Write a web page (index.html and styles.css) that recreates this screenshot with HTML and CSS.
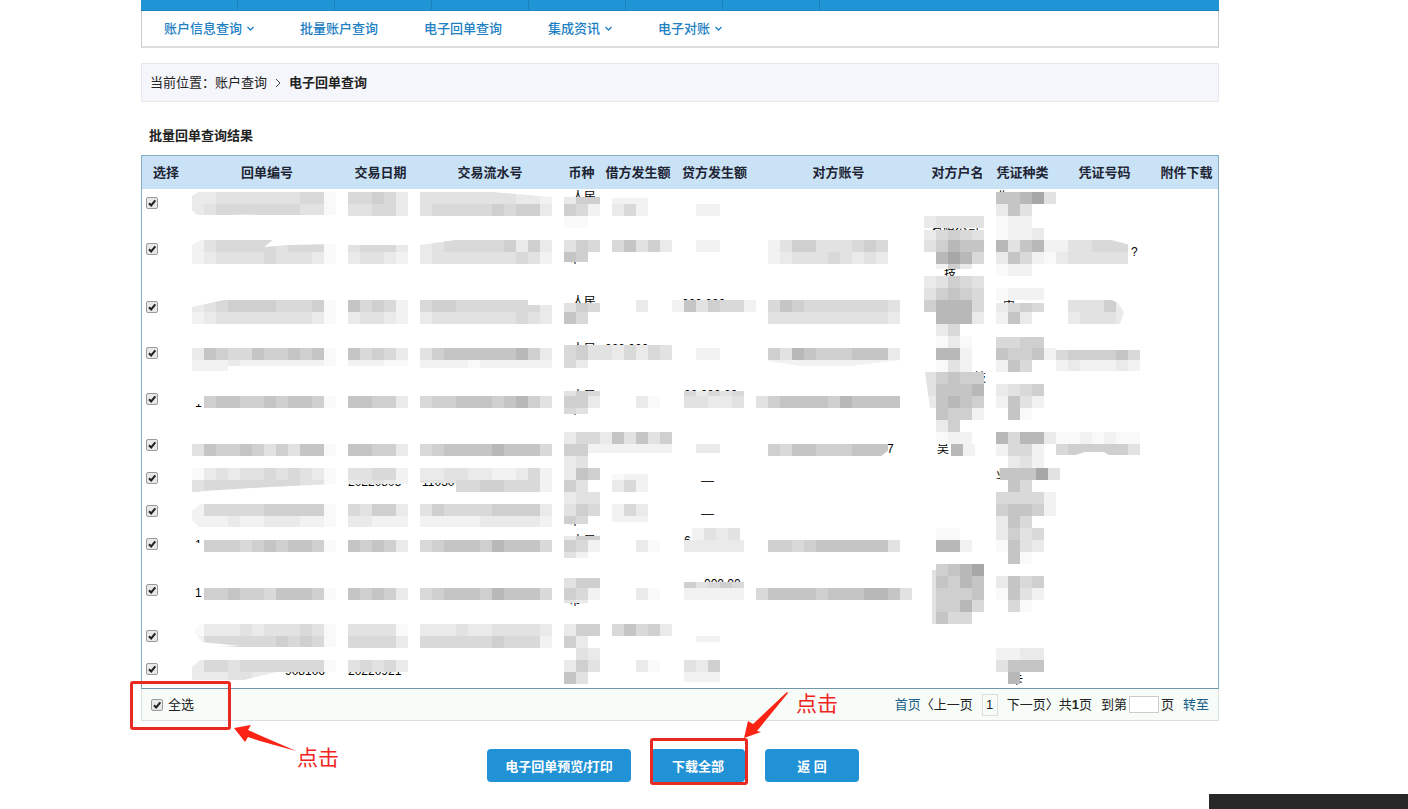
FILE: index.html
```
<!DOCTYPE html>
<html lang="zh-CN">
<head>
    <meta charset="UTF-8">
    <meta name="viewport" content="width=device-width, initial-scale=1.0">
    <title>电子回单查询</title>
    <link rel="stylesheet" href="styles.css">
</head>
<body>
    <div class="page">
        <div class="top-bar">
            <span></span><span></span><span></span><span></span><span></span><span></span><span></span>
        </div>
        <nav class="sub-nav">
            <a href="#">账户信息查询<svg class="caret" viewBox="0 0 7 5"><path d="M0.5 1 L3.5 4 L6.5 1"/></svg></a>
            <a href="#">批量账户查询</a>
            <a href="#">电子回单查询</a>
            <a href="#">集成资讯<svg class="caret" viewBox="0 0 7 5"><path d="M0.5 1 L3.5 4 L6.5 1"/></svg></a>
            <a href="#">电子对账<svg class="caret" viewBox="0 0 7 5"><path d="M0.5 1 L3.5 4 L6.5 1"/></svg></a>
        </nav>

        <div class="breadcrumb">
            <span>当前位置：账户查询</span>
            <svg class="arrow" viewBox="0 0 6 10"><path d="M1 1 L5 5 L1 9"/></svg>
            <strong>电子回单查询</strong>
        </div>

        <h1>批量回单查询结果</h1>

        <div class="table-wrap">
            <table>
                <colgroup>
                    <col class="c-select"><col class="c-number"><col class="c-date"><col class="c-serial">
                    <col class="c-currency"><col class="c-debit"><col class="c-credit"><col class="c-account">
                    <col class="c-name"><col class="c-type"><col class="c-voucher"><col class="c-file">
                </colgroup>
                <thead>
                    <tr>
                        <th>选择</th><th>回单编号</th><th>交易日期</th><th>交易流水号</th><th>币种</th><th>借方发生额</th>
                        <th>贷方发生额</th><th>对方账号</th><th>对方户名</th><th>凭证种类</th><th>凭证号码</th><th>附件下载</th>
                    </tr>
                </thead>
                <tbody id="rows"></tbody>
            </table>
            <!-- mosaic over the private data -->
            <svg id="mosaic" class="mosaic" viewBox="142 189 1076 499" preserveAspectRatio="none" aria-hidden="true"></svg>
        </div>

        <div class="table-footer">
            <label class="select-all"><input type="checkbox" checked>全选</label>
            <div class="pager">
                <span class="pair"><a href="#">首页</a><span>〈上一页</span></span>
                <span class="current">1</span>
                <span class="pair"><span>下一页〉</span><span>共<b>1</b>页</span></span>
                <span class="goto"><label for="pageNo">到第</label><input type="text" id="pageNo">页</span>
                <a href="#">转至</a>
            </div>
            <div class="mark mark-select"></div>
            <svg class="pointer pointer-select" viewBox="0 0 64 26"><path d="M0 3 L17 0 L14 5 L62 26 L26 16 L14 12 L11 17 Z"/></svg>
            <span class="hint hint-select">点击</span>
        </div>

        <div class="actions">
            <button type="button" class="wide">电子回单预览/打印</button>
            <div class="download">
                <button type="button">下载全部</button>
                <div class="mark mark-download"></div>
                <svg class="pointer pointer-download" viewBox="0 0 46 46"><path d="M1 46 L5 29 L10 32 L44 0 L45 1 L14 39 L18 40 Z"/></svg>
                <span class="hint hint-download">点击</span>
            </div>
            <button type="button">返 回</button>
        </div>
    </div>
    <div class="taskbar"></div>

    <script src="mosaic.js"></script>
</body>
</html>
```
FILE: styles.css
```
* { box-sizing: border-box; }
body { margin: 0; background-color: #fff; color: #222; font-family: "Liberation Sans", "Noto Sans CJK SC", sans-serif; font-size: 13px; line-height: 20px; }
a { color: #1c5f86; text-decoration: none; }
.page { padding: 0 189px 16px 141px; }

.top-bar { display: flex; height: 11px; background-color: #2095d6; border-bottom: 1px solid #1b86c3; }
.top-bar span { width: 97px; border-right: 1px solid #1b80bb; }
.sub-nav { display: flex; align-items: center; height: 37px; padding: 0 22px; gap: 46px; border: 1px solid #ccc; border-top: none; border-bottom: 2px solid #ddd; }
.sub-nav a { display: flex; align-items: center; gap: 5px; color: #2180c4; font-weight: 500; }
.caret { width: 7px; height: 5px; fill: none; stroke: #2180c4; stroke-width: 1.3; }

.breadcrumb { display: flex; align-items: center; gap: 8px; height: 39px; margin-top: 15px; padding: 0 8px; background-color: #f5f6fb; border: 1px solid #e6e6eb; }
.arrow { width: 6px; height: 10px; fill: none; stroke: #444; stroke-width: 1; }
h1 { margin: 24px 0 9px; padding-left: 8px; font-size: 13px; line-height: 20px; }

.table-wrap { position: relative; border: 1px solid #86adc4; border-bottom: 1px solid #7396a6; }
table { width: 100%; table-layout: fixed; border-collapse: collapse; }
th { height: 33px; padding: 0; background-color: #cae2f6; font-size: 13px; color: #1d2433; white-space: nowrap; }
td { padding: 8px 0 0 4px; vertical-align: top; line-height: 18px; }
td.credit { padding-right: 18px; text-align: center; }
.c-select { width: 48px; }
.c-number { width: 154px; }
.c-date { width: 73px; }
.c-serial { width: 146px; }
.c-currency { width: 37px; }
.c-debit { width: 76px; }
.c-credit { width: 77px; }
.c-account { width: 171px; }
.c-name { width: 67px; }
.c-type { width: 63px; }
.c-voucher { width: 101px; }
.c-file { width: 63px; }
.one-line { height: 33px; }
.two-line { height: 46px; }
.three-line { height: 58px; }
.mosaic { position: absolute; left: 0; top: 33px; width: 100%; height: calc(100% - 33px); pointer-events: none; font-size: 12px; }

input[type="checkbox"] { appearance: none; display: block; width: 12px; height: 12px; margin: 0; border: 1px solid #9a9a9a; border-radius: 2px; background: #e8e8e8 url("data:image/svg+xml,%3Csvg xmlns='http://www.w3.org/2000/svg' viewBox='0 0 10 10'%3E%3Cpath d='M2 5.2 L4.2 7.5 L8.3 2.4' fill='none' stroke='%23222' stroke-width='2'/%3E%3C/svg%3E") center / 10px 10px no-repeat; }

.table-footer { position: relative; display: flex; align-items: center; justify-content: space-between; height: 32px; padding: 0 9px; background-color: #f7fcf9; border: 1px solid #dcdfdf; border-top: none; }
.select-all { display: flex; align-items: center; gap: 5px; }
.pager { display: flex; align-items: center; gap: 9px; }
.pair { display: flex; }
.current { width: 16px; height: 22px; border: 1px solid #dcdcdc; text-align: center; }
.goto { display: flex; align-items: center; gap: 2px; }
.goto input { width: 30px; height: 17px; padding: 0 2px; border: 1px solid #ccc; background-color: #fff; }

.actions { display: flex; justify-content: center; gap: 20px; margin-top: 28px; padding-right: 14px; }
button { width: 94px; height: 33px; padding: 0; border: none; border-radius: 4px; background-color: #2192d6; color: #fff; font-family: inherit; font-size: 13px; font-weight: bold; cursor: pointer; }
button.wide { width: 144px; }
.download { position: relative; }

.mark { position: absolute; border: 3px solid #e92a22; border-radius: 3px; }
.mark-select { left: -12px; top: -8px; width: 101px; height: 49px; }
.mark-download { left: -1px; top: -11px; width: 98px; height: 47px; }
.pointer { position: absolute; fill: #fb2314; }
.pointer-select { left: 92px; top: 36px; width: 64px; height: 26px; }
.pointer-download { left: 92px; top: -57px; width: 46px; height: 46px; }
.hint { position: absolute; color: #f0241c; font-size: 21px; line-height: 24px; white-space: nowrap; }
.hint-select { left: 155px; top: 57px; }
.hint-download { left: 145px; top: -57px; }

.taskbar { position: fixed; right: 0; bottom: 0; width: 199px; height: 15px; background-color: #282828; }
```
FILE: mosaic.js
```
// row heights and the credit column of the rows that have no amount
const rows = [
    ["two-line", ""], ["three-line", ""], ["two-line", ""], ["two-line", ""],
    ["two-line", ""], ["one-line", ""], ["one-line", "—"], ["one-line", "—"],
    ["two-line", ""], ["two-line", ""], ["one-line", ""], ["one-line", ""]
];

document.getElementById("rows").innerHTML = rows.map(([size, credit], i) => `
    <tr class="${size}">
        <td><input type="checkbox" aria-label="选择第${i + 1}行" checked></td>
        <td></td><td></td><td></td><td></td><td></td>
        <td class="credit">${credit}</td>
        <td></td><td></td><td></td><td></td><td></td>
    </tr>`).join("");

// 1 = lightest, 9 = darkest, "." = no tile
const shades = ["", "#f9f9f9", "#f2f2f2", "#eaeaea", "#e2e2e2", "#d9d9d9", "#cfcfcf", "#c5c5c5", "#b8b8b8", "#a7a7a7"];

// text that still shows at the edges of the tiles: x, y, text
const texts = [
    [572, 201, "人民"], [572, 306, "人民"], [572, 353, "人民"], [572, 400, "人民"], [572, 545, "人民"],
    [569, 263, "币"], [569, 367, "币"], [569, 414, "币"], [569, 525, "币"], [569, 605, "币"],
    [605, 353, "000,000"], [682, 308, "000,000"], [684, 399, "00,000.00"], [704, 588, "000.00"],
    [684, 545, "6"], [195, 407, "1"], [195, 549, "1"], [195, 597, "1"], [1131, 256, "?"],
    [348, 486, "20220805"], [422, 486, "110507"], [285, 675, "908106"], [348, 675, "20220921"],
    [937, 453, "吴"], [931, 235, "有限公司"], [944, 278, "技"], [944, 332, "司"], [1003, 310, "中"],
    [996, 479, "业"], [1011, 684, "卡"], [974, 382, "技"], [996, 201, "业"], [887, 453, "7"]
];

// x, y, shades, height
const tiles = [
    [192, 192, "334444444551"], [192, 204, "345555555441", 11],
    [348, 192, "55653"], [348, 204, "44553"],
    [420, 192, "44444444332"], [420, 204, "45555565663"],
    [564, 197, "366", 7], [564, 204, "652"], [564, 216, "11"],
    [612, 198, "222", 6], [612, 204, "352"], [696, 204, "22"],
    [996, 192, "77894"], [996, 204, "374"], [996, 216, "122"], [996, 228, "1223"],

    [192, 240, "245555545551"], [192, 252, "234444544431"],
    [348, 245, "45553", 7], [348, 252, "34432"],
    [420, 240, "34555556363"], [420, 252, "34444444542"],
    [564, 240, "465"], [564, 252, "76", 10],
    [612, 240, "57463"], [696, 240, "22"],
    [768, 240, "2466444565"], [768, 252, "2344454343"],
    [924, 216, "34444"], [924, 230, "35654", 10], [924, 240, "46877"], [936, 252, "8985"], [936, 264, "263", 5],
    [996, 240, "84782"], [996, 252, "37521"], [996, 264, "122"],
    [1056, 240, "244555"], [1056, 252, "344444"],

    [192, 300, "345666655561"], [192, 312, "234444444431"],
    [348, 300, "75652"], [348, 312, "34432"],
    [420, 300, "566555555"], [528, 305, "53", 7], [420, 312, "34444444543"],
    [564, 303, "465", 9], [564, 312, "75"],
    [636, 300, "3"], [672, 300, "2746552"],
    [768, 300, "57655555554"], [768, 312, "44444444443"],
    [924, 276, "34654"], [924, 288, "46765"], [924, 300, "68885"], [936, 312, "8883"], [936, 324, "35"], [936, 336, "22"],
    [996, 288, "1222"], [996, 303, "3565", 9], [996, 312, "273"],
    [1068, 300, "44463"], [1068, 312, "34443"],

    [192, 348, "376557667671"], [192, 360, "222322222221", 6], [192, 366, "222", 5],
    [348, 348, "75653"], [348, 360, "22211", 6],
    [420, 348, "46777777863"], [420, 360, "22221222222", 8],
    [564, 345, "564435354", 15], [564, 360, "53", 8],
    [696, 348, "22"], [768, 348, "64876667773"], [768, 360, "22222222222", 6],
    [936, 336, "131"], [936, 348, "882"], [936, 360, "142"],
    [996, 337, "5566", 11], [996, 348, "76672"], [996, 360, "275"],
    [1056, 350, "5666675", 10], [1056, 360, "2322232", 11],

    [204, 396, "67766767761"], [348, 396, "77663"], [420, 396, "56677767864"],
    [564, 391, "465", 5], [564, 396, "663"], [564, 408, "54", 6],
    [636, 396, "31"], [684, 391, "53545", 5], [684, 396, "44334"],
    [756, 396, "467777687777"],
    [924, 372, "46766"], [924, 384, "47778"], [924, 396, "37876"], [936, 408, "7662"], [936, 420, "36"], [936, 432, "122"],
    [996, 384, "3456"], [996, 396, "2742"], [996, 408, ".71"],

    [192, 444, "476676464771"], [348, 444, "77663"], [420, 444, "56777787775"],
    [564, 432, "355374746"], [564, 444, "66"], [588, 444, "2222222", 9],
    [564, 456, "34"], [564, 468, "376"], [564, 480, "64"], [564, 492, "344"], [564, 504, "465"], [564, 516, "65", 8],
    [696, 444, "33", 9], [768, 444, "6577666777"],
    [951, 444, "82"], [996, 432, "85883"], [996, 444, "2552"], [996, 456, ".342"],
    [1056, 432, "1121211"], [1056, 444, "5666664", 11],

    [192, 468, "134344545431"], [192, 480, "455555555441"],
    [348, 468, "44552"], [348, 480, "34432", 4],
    [420, 468, "33443322352"], [420, 480, "444", 3], [456, 480, "55665552"],
    [612, 474, "122", 6], [612, 480, "352"],
    [1000, 468, "77794"], [1008, 480, "75"], [996, 492, "55552"], [996, 504, "67762"],
    [996, 516, "375"], [996, 528, "3645"], [996, 540, "1743"], [996, 552, ".71"],

    [192, 504, "255555666661"], [192, 516, "222322333221", 11],
    [348, 504, "54663"], [348, 516, "33222", 11],
    [420, 504, "46555566663"], [420, 516, "22222333332", 11],
    [612, 504, "253"], [612, 516, "222", 6],

    [204, 540, "66656767761"], [348, 540, "76763"], [420, 540, "56777687775"],
    [564, 536, "366", 4], [564, 540, "652"], [564, 552, "42", 6],
    [636, 540, "31"], [692, 528, "2434"], [684, 540, "33333"],
    [768, 540, "66567777774"], [936, 528, "11"], [936, 540, "882"],

    [204, 588, "66766577761"], [348, 588, "76763"], [420, 588, "56777687775"],
    [564, 578, "466", 10], [564, 588, "652"], [564, 600, "43", 3],
    [636, 588, "31"], [684, 582, "64565", 6], [684, 588, "22222"],
    [756, 588, "5777767778874"],
    [932, 570, "4", 54], [936, 564, "6789"], [936, 576, "7687"], [936, 588, "6667"], [936, 600, "6685"], [936, 612, "755"],
    [996, 576, "3756"], [996, 588, "1742"], [996, 600, ".51"],

    [192, 624, "133343444541"], [192, 636, "255555565651", 11],
    [348, 624, "44441"], [348, 636, "55553"],
    [420, 624, "33343344443"], [420, 636, "55555565552"],
    [564, 624, "366"], [564, 636, "63"], [564, 648, ".43"], [564, 660, "364"], [564, 672, "74"],
    [612, 624, "57563"], [696, 636, "22", 6],

    [192, 660, "355455555551"], [192, 672, "3334433", 8],
    [348, 660, "45453"], [636, 660, "31"], [684, 660, "436"], [684, 672, "222", 10],
    [996, 648, "2233"], [996, 660, "4777"], [1008, 672, "8"]
];

// white corners rubbed out of the tiles
const cuts = [
    "192,191 200,191 192,196", "192,210 198,216 268,214 192,217", "480,191 552,191 552,197",
    "192,240 200,240 192,245", "274,239 336,239 336,244 288,245 264,247", "420,239 462,239 420,245",
    "192,299 228,299 192,307", "1108,239 1130,239 1130,245",
    "192,493 204,491 270,487 336,484 336,493", "192,504 200,504 192,511", "192,520 200,528 192,528",
    "768,361 800,366 850,366 900,360 900,372 768,372", "888,444 889,450 880,457 889,457",
    "1128,299 1110,299 1118,303 1124,312 1120,324 1128,324", "924,372 925,372 930,408 924,408",
    "192,624 200,624 194,632 202,642 240,646 192,648", "192,660 200,660 192,667",
    "276,672 240,681 276,681", "588,456 612,462 588,462", "1072,456 1085,452 1104,452 1110,456",
    "192,396 203,396 203,404 192,404", "192,543 203,543 203,552 192,552"
];

let svg = texts.map(([x, y, text]) => `<text x="${x}" y="${y}">${text}</text>`).join("");
tiles.forEach(([x, y, row, height = 12]) => {
    [...row].forEach((shade, i) => {
        if (shade !== ".") {
            svg += `<rect x="${x + i * 12}" y="${y}" width="12" height="${height}" fill="${shades[shade]}"/>`;
        }
    });
});
svg += cuts.map(points => `<polygon points="${points}" fill="#fff"/>`).join("");
document.getElementById("mosaic").innerHTML = svg;
```
